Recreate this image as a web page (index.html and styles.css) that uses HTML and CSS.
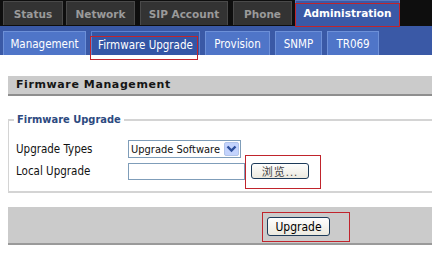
FILE: index.html
```html
<!DOCTYPE html>
<html lang="en">
<head>
    <meta charset="UTF-8">
    <title>Administration - Firmware Upgrade</title>
    <link rel="stylesheet" href="styles.css">
</head>
<body>
    <div class="top-nav">
        <a class="tab tab-status">Status</a>
        <a class="tab tab-network">Network</a>
        <a class="tab tab-sip">SIP Account</a>
        <a class="tab tab-phone">Phone</a>
        <a class="tab tab-admin active">Administration<span class="mark"></span></a>
    </div>
    <div class="sub-nav">
        <a class="subtab sub-mgmt">Management</a>
        <a class="subtab sub-fw active">Firmware Upgrade<span class="mark"></span></a>
        <a class="subtab sub-prov">Provision</a>
        <a class="subtab sub-snmp">SNMP</a>
        <a class="subtab sub-tr">TR069</a>
    </div>

    <div class="content">
        <div class="section-title">Firmware Management</div>

        <fieldset class="group">
            <legend>Firmware Upgrade</legend>
            <div class="row">
                <label>Upgrade Types</label>
                <div class="select">
                    <span>Upgrade Software</span>
                    <span class="select-arrow">
                        <svg width="11" height="8" viewBox="0 0 11 8"><path d="M1.5 1.5 L5.5 5.5 L9.5 1.5" fill="none" stroke="#2d4f9c" stroke-width="2.4"/></svg>
                    </span>
                </div>
            </div>
            <div class="row">
                <label>Local Upgrade</label>
                <div class="file-input"></div>
                <div class="browse-wrap">
                    <button class="btn btn-browse">浏览...</button>
                    <span class="mark"></span>
                </div>
            </div>
        </fieldset>

        <div class="action-bar">
            <div class="upgrade-wrap">
                <button class="btn btn-upgrade">Upgrade</button>
                <span class="mark"></span>
            </div>
        </div>
    </div>
</body>
</html>
```

FILE: styles.css
```css
:root {
    --nav-black: #0e0e0e;
    --tab-gray: #333333;
    --tab-border: #4a4a4a;
    --nav-blue: #3a59a6;
    --subtab-blue: #4f75c8;
    --subtab-border: #6d90d8;
    --panel-gray: #cbcbcb;
    --legend-blue: #2d4a80;
    --mark-red: #c0242c;
}

* {
    margin: 0;
    padding: 0;
    box-sizing: border-box;
}

body {
    font-family: "DejaVu Sans Condensed", "DejaVu Sans", sans-serif;
    font-size: 11px;
    color: #111;
    background: #fff;
    width: 432px;
    height: 255px;
    overflow: hidden;
}

/* top tabs */
.top-nav {
    display: flex;
    align-items: flex-end;
    height: 26px;
    background: var(--nav-black);
    padding-left: 3px;
}

.tab {
    position: relative;
    display: flex;
    align-items: center;
    justify-content: center;
    height: 24px;
    margin-bottom: 1px;
    margin-right: 3px;
    background: var(--tab-gray);
    border: 1px solid var(--tab-border);
    border-bottom: none;
    color: #9a9a9a;
    font-family: "DejaVu Sans", sans-serif;
    font-weight: bold;
    font-size: 10.5px;
}

.tab-status { width: 60px; }
.tab-network { width: 69px; margin-right: 5px; }
.tab-sip { width: 88px; margin-right: 5px; }
.tab-phone { width: 59px; }

.tab.active {
    width: 105px;
    height: 26px;
    margin-bottom: 0;
    background: var(--nav-blue);
    border-color: #5b79c0;
    color: #fff;
    padding-bottom: 2px;
}

/* sub tabs */
.sub-nav {
    display: flex;
    align-items: flex-end;
    height: 29px;
    background: var(--nav-blue);
    padding-left: 3px;
}

.subtab {
    position: relative;
    display: flex;
    align-items: center;
    justify-content: center;
    height: 24px;
    margin-right: 5px;
    background: var(--subtab-blue);
    border: 1px solid var(--subtab-border);
    border-bottom: none;
    color: #fff;
    font-size: 11.5px;
}

.sub-mgmt { width: 83px; }
.sub-fw { width: 109px; }
.sub-prov { width: 65px; }
.sub-snmp { width: 47px; }
.sub-tr { width: 52px; }

.subtab.active {
    background: #3456a6;
    border-color: #5f82cf;
    padding-top: 2px;
}

/* red annotation boxes */
.mark {
    position: absolute;
    border: 1px solid var(--mark-red);
    pointer-events: none;
}

.tab-admin .mark {
    left: -1px;
    right: -1px;
    top: 2px;
    bottom: -1px;
}

.sub-fw .mark {
    left: -2px;
    right: 1px;
    top: 4px;
    bottom: -5px;
}

/* content */
.content {
    padding: 21px 0 0 8px;
}

.section-title {
    height: 20px;
    background: var(--panel-gray);
    border-bottom: 2px solid #8e8e8e;
    padding-left: 8px;
    font-family: "DejaVu Sans", sans-serif;
    font-weight: bold;
    font-size: 11px;
    letter-spacing: 0.6px;
    line-height: 18px;
    color: #151515;
}

.group {
    margin-top: 17px;
    border: none;
    border-top: 2px solid #d4d4d4;
    border-left: 1px solid #d4d4d4;
    border-bottom: 2px solid #d4d4d4;
    padding: 12px 0 9px 7px;
}

.group legend {
    margin-left: -2px;
    padding: 0 3px;
    font-weight: bold;
    font-size: 11px;
    color: var(--legend-blue);
}

.row {
    display: flex;
    align-items: center;
    height: 22px;
}

.row label {
    width: 112px;
    font-size: 11.5px;
}

.select {
    display: flex;
    align-items: center;
    justify-content: space-between;
    width: 113px;
    height: 18px;
    border: 1px solid #7f9db9;
    padding: 0 1px 0 2px;
    font-size: 11px;
    white-space: nowrap;
}

.select-arrow {
    display: flex;
    align-items: center;
    justify-content: center;
    flex-shrink: 0;
    width: 15px;
    height: 14px;
    background: #c3d3fd;
    border: 1px solid #b1c4ea;
    border-radius: 2px;
}

.file-input {
    width: 117px;
    height: 17px;
    border: 1px solid #7f9db9;
}

.browse-wrap,
.upgrade-wrap {
    position: relative;
}

.btn {
    display: flex;
    align-items: center;
    justify-content: center;
    background: linear-gradient(#fefefe, #ece9df);
    border: 1px solid #1c3a59;
    border-radius: 3px;
    font-family: "DejaVu Sans Condensed", "Noto Sans CJK SC", sans-serif;
    color: #000;
}

.btn-browse {
    width: 58px;
    height: 16px;
    margin-left: 6px;
    font-size: 11px;
    letter-spacing: 1px;
    color: #444;
}

.browse-wrap .mark {
    left: 0;
    top: -8px;
    width: 76px;
    height: 34px;
}

.action-bar {
    display: flex;
    margin-top: 14px;
    height: 38px;
    background: var(--panel-gray);
    border-bottom: 2px solid #9a9a9a;
    padding: 10px 0 0 259px;
}

.btn-upgrade {
    width: 63px;
    height: 19px;
    font-size: 12px;
}

.upgrade-wrap .mark {
    left: -5px;
    top: -5px;
    width: 88px;
    height: 30px;
}
```
